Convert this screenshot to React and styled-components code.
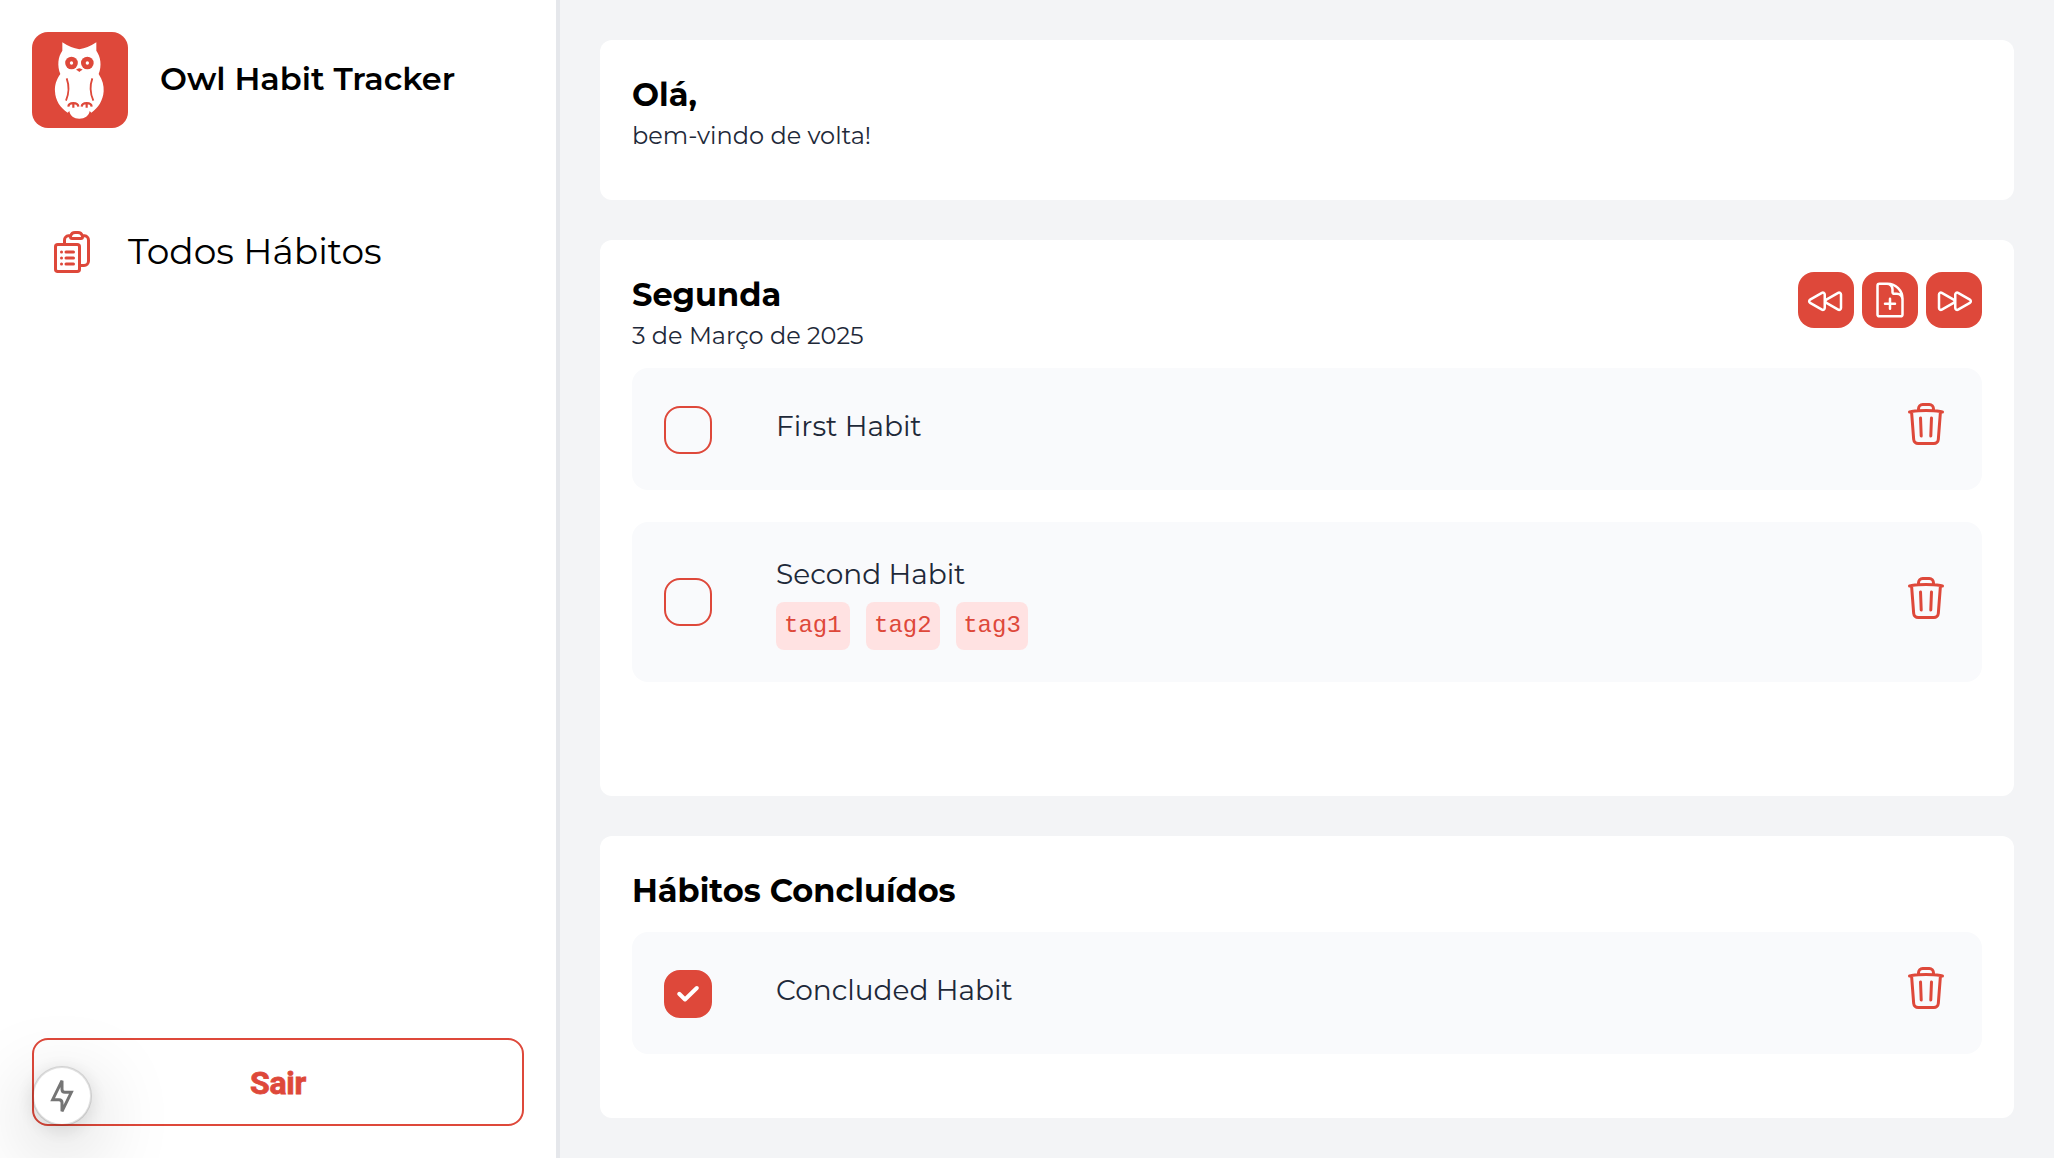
import React from "react";
import styled, { createGlobalStyle } from "styled-components";
import {
  HiOutlineBackward,
  HiOutlineClipboardDocumentList,
  HiOutlineDocumentPlus,
  HiOutlineForward,
  HiOutlineTrash,
} from "react-icons/hi2";

const red = "#de483a";

const GlobalStyle = createGlobalStyle`
  *, *::before, *::after { box-sizing: border-box; }
  body {
    margin: 0;
    background: #ffffff;
    color: #000000;
    font-family: Montserrat, Inter, "Liberation Sans", sans-serif;
  }
  h1, h2, p, ul { margin: 0; padding: 0; }
  ul { list-style: none; }
  button { font: inherit; cursor: pointer; }
  svg { display: block; }
`;

const Page = styled.div`
  display: flex;
  height: 100vh;
  overflow: hidden;
`;

const Sidebar = styled.aside`
  display: flex;
  flex-direction: column;
  flex: none;
  width: 560px;
  padding: 32px;
  border-right: 4px solid #e5e7eb;
  background: #ffffff;
`;

const Brand = styled.div`
  display: flex;
  align-items: center;
  gap: 32px;
`;

const Logo = styled.svg`
  width: 96px;
  height: 96px;
  border-radius: 16px;
  background: ${red};
`;

const BrandName = styled.h1`
  padding-bottom: 3px;
  font-size: 32px;
  font-weight: 600;
  line-height: 40px;
  white-space: nowrap;
`;

const Nav = styled.nav`
  flex: 1;
  padding: 100px 0 0 16px;
`;

const NavLink = styled.a`
  display: flex;
  align-items: center;
  gap: 32px;
  font-size: 36px;
  line-height: 46px;

  svg {
    width: 48px;
    height: 48px;
    color: ${red};
  }

  span {
    padding-bottom: 2px;
    white-space: nowrap;
  }
`;

const LogoutButton = styled.button`
  height: 88px;
  padding: 2px 0 0;
  border: 2px solid ${red};
  border-radius: 16px;
  background: transparent;
  color: ${red};
  font-family: Roboto, "Liberation Sans", sans-serif;
  font-size: 32px;
  font-weight: 700;
  letter-spacing: -0.3px;
  -webkit-text-stroke: 0.8px ${red};
`;

const Main = styled.main`
  display: flex;
  flex: 1;
  flex-direction: column;
  gap: 40px;
  padding: 40px;
  background: #f3f4f6;
`;

const Card = styled.section`
  flex: ${(p) => (p.$height ? "none" : "1")};
  height: ${(p) => (p.$height ? `${p.$height}px` : "auto")};
  padding: 32px;
  border-radius: 12px;
  background: #ffffff;
`;

const CardHeader = styled.header`
  display: flex;
  align-items: flex-start;
  justify-content: space-between;
  height: ${(p) => p.$height}px;
`;

const CardTitle = styled.h2`
  font-size: 32px;
  font-weight: 700;
  line-height: 45px;
`;

const CardSubtitle = styled.p`
  color: #1e2939;
  font-size: 24px;
  line-height: 37px;
`;

const Toolbar = styled.div`
  display: flex;
  gap: 8px;
`;

const ToolButton = styled.button`
  width: 56px;
  height: 56px;
  padding: 8px;
  border: 0;
  border-radius: 16px;
  background: ${red};
  color: #ffffff;

  svg {
    width: 40px;
    height: 40px;
  }
`;

const HabitList = styled.ul`
  display: flex;
  flex-direction: column;
  gap: 32px;
`;

const HabitRow = styled.li`
  display: flex;
  align-items: center;
  padding: 32px 32px ${(p) => (p.$tagged ? 32 : 31)}px;
  border-radius: 16px;
  background: #f9fafc;
`;

const Checkbox = styled.button`
  flex: none;
  width: 48px;
  height: 48px;
  padding: 0;
  border: 2px solid ${red};
  border-radius: 16px;
  background: ${(p) => (p.$checked ? red : "transparent")};
  color: #ffffff;

  svg {
    width: 44px;
    height: 44px;
  }
`;

const HabitBody = styled.div`
  flex: 1;
  padding-left: 64px;
`;

const HabitName = styled.p`
  margin-bottom: 8px;
  color: #1e2939;
  font-size: 28px;
  line-height: 40px;
`;

const Tags = styled.div`
  display: flex;
  gap: 16px;
`;

const Tag = styled.span`
  width: 74px;
  padding-left: 8px;
  border-radius: 8px;
  background: #ffe2e2;
  color: ${red};
  font-family: "Liberation Mono", monospace;
  font-size: 24px;
  line-height: 48px;

  &:last-child {
    width: 72px;
    padding-left: 7.2px;
  }
`;

const DeleteButton = styled.button`
  flex: none;
  height: 59px;
  padding: ${(p) => (p.$tagged ? "1.5px 0 9.5px" : "0 0 11px")};
  border: 0;
  background: none;
  color: ${red};

  svg {
    width: 48px;
    height: 48px;
  }
`;

const DevBadge = styled.div`
  position: fixed;
  left: 31.5px;
  bottom: 32px;
  display: flex;
  align-items: center;
  justify-content: center;
  width: 60px;
  height: 60px;
  border: 2px solid rgba(0, 0, 0, 0.12);
  border-radius: 50%;
  background: #ffffff;
  background-clip: padding-box;
  box-shadow: 0 22px 80px rgba(0, 0, 0, 0.25), 0 4px 20px rgba(0, 0, 0, 0.12);

  svg {
    flex: none;
    width: 56px;
    height: 56px;
  }
`;

function OwlLogo() {
  return (
    <Logo viewBox="0 0 96 96" aria-hidden="true">
      <g transform="translate(18 2) scale(0.33333)">
        <path
          fill="#fff"
          d="M37 25Q62 42 88 46Q114 42 139 25V50C152 68 156 95 146 120C158 138 162 155 161 172C159 200 145 222 124 236L119 231C117 246 104 254 88 254C72 254 60 246 58 231L53 236C31 222 16 200 15 172C14 155 18 138 31 120C21 95 24 68 37 50Z"
        />
        <g fill={red}>
          <circle cx="64.500" cy="87" r="19" />
          <circle cx="112" cy="87" r="19" />
          <path d="M78 107Q88 98 98 107Q92 110 88 114Q84 110 78 107Z" />
        </g>
        <circle cx="64.500" cy="87" r="5" fill="#fff" />
        <circle cx="112" cy="87" r="5" fill="#fff" />
        <g fill="none" stroke={red} strokeWidth="5.500">
          <path d="M50 133Q62 166 48 200" />
          <path d="M127 133Q115 166 130 200" />
          <path strokeWidth="6.500" d="M55 218C56 204 84 204 85 218M70 207V221" />
          <path strokeWidth="6.500" d="M95 218C96 204 124 204 125 218M110 207V221" />
        </g>
      </g>
    </Logo>
  );
}

function Habit({ name, tags, checked }) {
  const tagged = Boolean(tags);
  return (
    <HabitRow $tagged={tagged}>
      <Checkbox $checked={checked} role="checkbox" aria-checked={Boolean(checked)}>
        {checked && (
          <svg viewBox="2 2 44 44" fill="none" stroke="currentColor" strokeWidth="4" strokeLinecap="round" strokeLinejoin="round">
            <path d="M15.200 23.800L21 29.500L32.800 18" />
          </svg>
        )}
      </Checkbox>
      <HabitBody>
        <HabitName>{name}</HabitName>
        {tagged && (
          <Tags>
            {tags.map((tag) => (
              <Tag key={tag}>{tag}</Tag>
            ))}
          </Tags>
        )}
      </HabitBody>
      <DeleteButton $tagged={tagged}>
        <HiOutlineTrash />
      </DeleteButton>
    </HabitRow>
  );
}

export default function App() {
  return (
    <Page>
      <GlobalStyle />
      <Sidebar>
        <Brand>
          <OwlLogo />
          <BrandName>Owl Habit Tracker</BrandName>
        </Brand>
        <Nav>
          <NavLink>
            <HiOutlineClipboardDocumentList />
            <span>Todos Hábitos</span>
          </NavLink>
        </Nav>
        <LogoutButton>Sair</LogoutButton>
      </Sidebar>
      <Main>
        <Card $height={160}>
          <CardTitle>Olá,</CardTitle>
          <CardSubtitle>bem-vindo de volta!</CardSubtitle>
        </Card>
        <Card $height={556}>
          <CardHeader $height={96}>
            <div>
              <CardTitle>Segunda</CardTitle>
              <CardSubtitle>3 de Março de 2025</CardSubtitle>
            </div>
            <Toolbar>
              <ToolButton>
                <HiOutlineBackward />
              </ToolButton>
              <ToolButton>
                <HiOutlineDocumentPlus />
              </ToolButton>
              <ToolButton>
                <HiOutlineForward />
              </ToolButton>
            </Toolbar>
          </CardHeader>
          <HabitList>
            <Habit name="First Habit" />
            <Habit name="Second Habit" tags={["tag1", "tag2", "tag3"]} />
          </HabitList>
        </Card>
        <Card>
          <CardHeader $height={64}>
            <CardTitle>Hábitos Concluídos</CardTitle>
          </CardHeader>
          <HabitList>
            <Habit name="Concluded Habit" checked />
          </HabitList>
        </Card>
      </Main>
      <DevBadge>
        <svg viewBox="24 24 168 168" fill="none" stroke="#757575" strokeWidth="9" strokeMiterlimit="3">
          <path d="M108 62L80 119H99Q108 119 108 128V154L136 97H117Q108 97 108 88Z" />
        </svg>
      </DevBadge>
    </Page>
  );
}
